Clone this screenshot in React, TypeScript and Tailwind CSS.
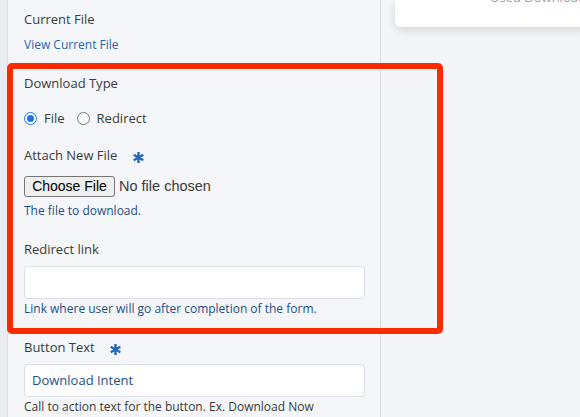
import React from "react";

function Star() {
  return (
    <svg width="11" height="11" viewBox="0 0 11 11" className="shrink-0">
      <g stroke="#2667b3" strokeWidth="2.4" strokeLinecap="butt">
        <line x1="5.5" y1="0" x2="5.5" y2="11" />
        <line x1="0.74" y1="2.75" x2="10.26" y2="8.25" />
        <line x1="0.74" y1="8.25" x2="10.26" y2="2.75" />
      </g>
    </svg>
  );
}

export default function App() {
  const font = { fontFamily: '"Open Sans", "Noto Sans", sans-serif' };
  return (
    <div className="relative w-[580px] h-[417px] overflow-hidden bg-[#f3f5f8] flex" style={font}>
      <div className="w-[8px] shrink-0 bg-[#e9edf2] border-r border-[#dde2e8]" />
      <div className="w-[373px] shrink-0 bg-[#f4f6f9] border-r border-[#d9dde3] pl-[16px] pr-[15px] flex flex-col [&>*]:shrink-0">
        <div className="h-[10px]" />
        <div className="text-[13px] leading-[18px] text-[#3b3b3b]">Current File</div>
        <a className="mt-[9px] text-[12px] leading-[16px] text-[#2667b3]">View Current File</a>
        <div className="mt-[21px] text-[13px] leading-[18px] text-[#3b3b3b]">Download Type</div>
        <div className="mt-[17px] h-[18px] flex items-center text-[13px] leading-[18px] text-[#3b3b3b]">
          <span className="w-[13px] h-[13px] rounded-full border border-[#1a73e8] flex items-center justify-center bg-white">
            <span className="w-[7px] h-[7px] rounded-full bg-[#1a73e8]" />
          </span>
          <span className="ml-[7px]">File</span>
          <span className="ml-[12px] w-[13px] h-[13px] rounded-full border border-[#767676] bg-white" />
          <span className="ml-[7px]">Redirect</span>
        </div>
        <div className="mt-[19px] h-[18px] flex items-center text-[13px] leading-[18px] text-[#3b3b3b]">
          <span>Attach New File</span>
          <span className="ml-[16px] translate-y-[2px]"><Star /></span>
        </div>
        <div className="mt-[12px] h-[21px] flex items-center" style={{ fontFamily: '"Liberation Sans", Arial, sans-serif' }}>
          <span className="h-[21px] w-[91px] border border-[#767676] rounded-[3px] bg-[#efefef] text-[14px] leading-[19px] text-black flex items-center justify-center">Choose File</span>
          <span className="ml-[4px] text-[14.5px] text-[#3b3b3b]">No file chosen</span>
        </div>
        <div className="mt-[6px] text-[12px] leading-[16px] text-[#1f4f86]">The file to download.</div>
        <div className="mt-[21px] text-[13px] leading-[18px] text-[#3b3b3b]">Redirect link</div>
        <div className="mt-[8px] h-[33px] w-[341px] bg-white border border-[#dcdfe4] rounded-[4px]" />
        <div className="mt-[2px] text-[12px] leading-[16px] text-[#1f4f86]">Link where user will go after completion of the form.</div>
        <div className="mt-[21px] h-[18px] flex items-center text-[13px] leading-[18px] text-[#3b3b3b]">
          <span>Button Text</span>
          <span className="ml-[15px] translate-y-[2px]"><Star /></span>
        </div>
        <div className="mt-[8px] h-[33px] w-[341px] bg-white border border-[#dcdfe4] rounded-[4px] flex items-center pl-[7px] text-[13px] text-[#1f4f86]">Download Intent</div>
        <div className="mt-[2px] text-[12px] leading-[16px] text-[#3b3b3b]">Call to action text for the button. Ex. Download Now</div>
      </div>
      <div className="flex-1 pl-[14px]">
        <div className="h-[27px] bg-white rounded-bl-[6px] shadow-[0_4px_10px_rgba(0,0,0,0.12)] overflow-hidden flex pl-[95px]">
          <span className="mt-[-12px] text-[13px] leading-[18px] text-[#9aa0a6] whitespace-nowrap">Used Download</span>
        </div>
      </div>
      <div className="absolute left-[7px] top-[63px] w-[436px] h-[271px] border-[6px] border-[#ff2a00] rounded-[5px] pointer-events-none" />
    </div>
  );
}
